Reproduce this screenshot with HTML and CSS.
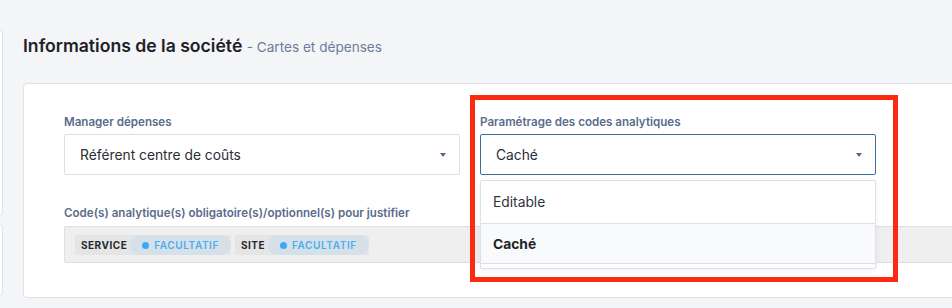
FILE: index.html
```html
<!DOCTYPE html>
<html lang="fr">
<head>
  <meta charset="UTF-8">
  <title>Informations de la société</title>
  <link rel="stylesheet" href="styles.css">
</head>
<body>
  <div class="page">
    <aside class="side">
      <div class="side-card side-card-top"></div>
      <div class="side-card side-card-bottom"></div>
    </aside>

    <main class="content">
      <h1 class="page-title">Informations de la société <span class="page-sub">- Cartes et dépenses</span></h1>

      <section class="card">
        <div class="form-grid">
          <div class="field">
            <label class="field-label">Manager dépenses</label>
            <div class="select">
              <span>Référent centre de coûts</span>
              <span class="caret"></span>
            </div>
          </div>

          <div class="field field-open">
            <label class="field-label">Paramétrage des codes analytiques</label>
            <div class="select select-focus">
              <span>Caché</span>
              <span class="caret"></span>
            </div>
            <ul class="menu">
              <li class="menu-item">Editable</li>
              <li class="menu-item menu-item-active">Caché</li>
            </ul>
            <div class="highlight"></div>
          </div>

          <div class="field field-wide">
            <label class="field-label">Code(s) analytique(s) obligatoire(s)/optionnel(s) pour justifier</label>
            <div class="codes">
              <div class="chip">
                <span class="chip-name">Service</span>
                <span class="pill"><span class="dot"></span>Facultatif</span>
              </div>
              <div class="chip">
                <span class="chip-name">Site</span>
                <span class="pill"><span class="dot"></span>Facultatif</span>
              </div>
            </div>
          </div>
        </div>
      </section>
    </main>
  </div>
</body>
</html>
```

FILE: styles.css
```css
* {
  box-sizing: border-box;
}

body {
  margin: 0;
  background: #f4f5f7;
  font-family: 'Inter', 'Noto Sans', sans-serif;
  color: #22262d;
  overflow: hidden;
}

.page {
  display: flex;
  align-items: flex-start;
}

.side {
  flex: none;
  width: 3px;
  padding-top: 30px;
  display: flex;
  flex-direction: column;
  gap: 10px;
}

.side-card {
  background: #ffffff;
  border: 1px solid #dfe2e8;
  border-left: none;
  border-radius: 0 4px 4px 0;
}

.side-card-top { height: 185px; }
.side-card-bottom { height: 70px; }

.content {
  flex: none;
  margin-left: 20px;
  padding-top: 34px;
}

.page-title {
  margin: 0 0 24px;
  font-size: 17.6px;
  line-height: 24px;
  font-weight: 600;
  color: #1d2127;
}

.page-sub {
  font-size: 13.6px;
  font-weight: 400;
  color: #6c7c9b;
}

.card {
  background: #ffffff;
  border: 1px solid #dfe2e8;
  border-radius: 4px;
  padding: 30px 40px 34px;
}

.form-grid {
  display: grid;
  grid-template-columns: 396px 396px 396px;
  column-gap: 20px;
  row-gap: 30px;
}

.field {
  position: relative;
}

.field-wide {
  grid-column: 1 / -1;
}

.field-label {
  display: block;
  font-size: 11.6px;
  line-height: 16px;
  font-weight: 600;
  color: #5a6c8c;
  margin-bottom: 4px;
}

.select {
  height: 41px;
  display: flex;
  align-items: center;
  justify-content: space-between;
  padding: 0 13px 0 15px;
  border: 1px solid #dcdfe5;
  border-radius: 2px;
  font-size: 13.8px;
  color: #2a2e35;
}

.select-focus {
  border-color: #3b6e9c;
}

.caret {
  width: 0;
  height: 0;
  border-left: 3.5px solid transparent;
  border-right: 3.5px solid transparent;
  border-top: 4px solid #56678a;
}

.menu {
  position: absolute;
  top: calc(100% + 5px);
  left: 0;
  right: 0;
  margin: 0;
  padding: 0 0 4px;
  list-style: none;
  background: #ffffff;
  border: 1px solid #dde0e7;
  border-radius: 2px;
  box-shadow: 0 2px 6px rgba(30, 40, 60, 0.06);
  z-index: 2;
}

.menu-item {
  padding: 0 12px;
  height: 43px;
  display: flex;
  align-items: center;
  font-size: 13.8px;
  color: #30343b;
  border-bottom: 1px solid #dde0e7;
}

.menu-item-active {
  height: 40px;
  background: #f9fafc;
  font-weight: 700;
  color: #1f2329;
}

.highlight {
  position: absolute;
  top: -19px;
  left: -10px;
  width: 428px;
  height: 187px;
  border: 5px solid #fb2a10;
  z-index: 3;
}

.codes {
  margin-top: 5px;
  height: 37px;
  display: flex;
  align-items: flex-start;
  gap: 4px;
  padding: 8px 10px 0;
  background: #efefef;
  border: 1px solid #dcdfe5;
  border-radius: 2px;
}

.chip {
  display: flex;
  align-items: center;
  height: 20px;
  padding-left: 6px;
  background: #e5e5e5;
  border-radius: 2px;
}

.chip-name {
  font-size: 10px;
  font-weight: 700;
  letter-spacing: 0.5px;
  text-transform: uppercase;
  color: #24282e;
  margin-right: 3px;
}

.pill {
  display: flex;
  align-items: center;
  gap: 5px;
  height: 20px;
  padding: 0 12px 0 12px;
  background: #d6e0e8;
  border-radius: 10px;
  font-size: 10px;
  font-weight: 600;
  letter-spacing: 0.6px;
  text-transform: uppercase;
  color: #4aaff0;
}

.dot {
  width: 7px;
  height: 7px;
  border-radius: 50%;
  background: #3aa8f2;
}
```
